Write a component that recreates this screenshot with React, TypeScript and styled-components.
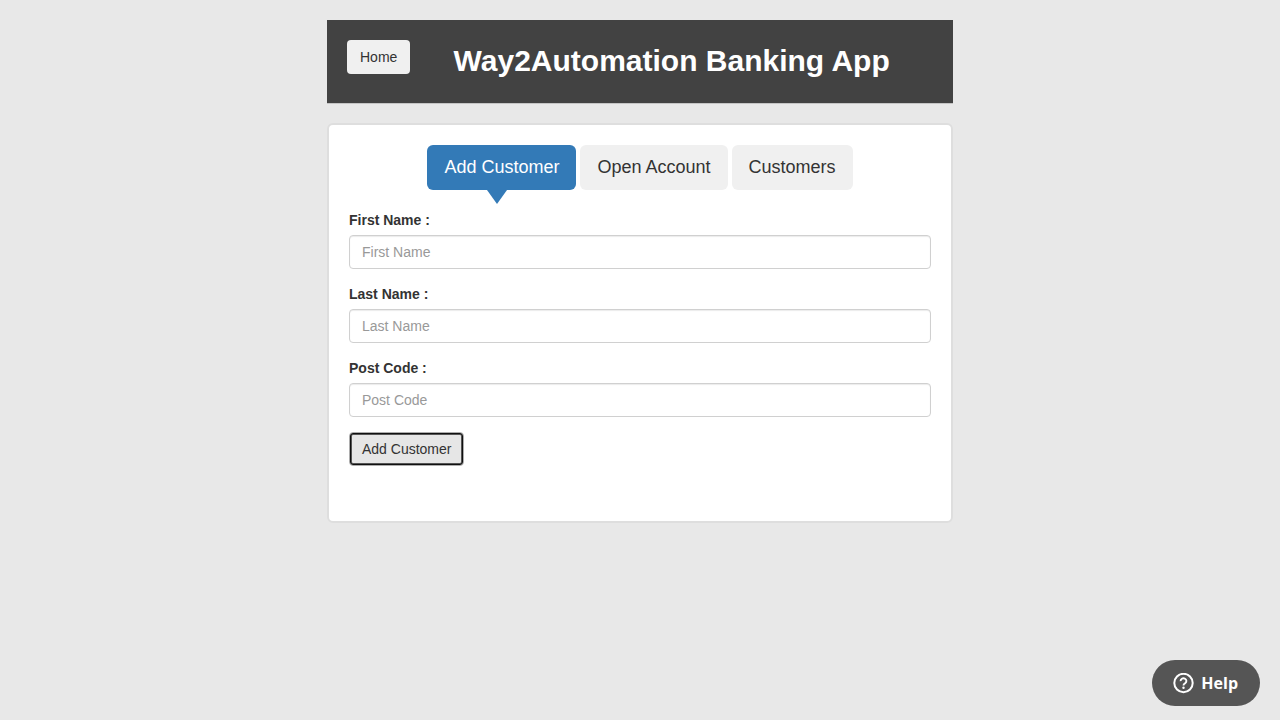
import React from "react";
import styled, { createGlobalStyle, css } from "styled-components";

const GlobalStyle = createGlobalStyle`
  *, *::before, *::after { box-sizing: border-box; }
  body {
    margin: 0;
    background: #e8e8e8;
    color: #333;
    font-family: "Liberation Sans", Arial, sans-serif;
    font-size: 14px;
    line-height: 20px;
  }
`;

const Page = styled.main`
  width: 100%;
  max-width: 626px;
  margin: 0 auto;
  padding: 20px 0;
  display: flex;
  flex-direction: column;
  gap: 20px;
`;

const Header = styled.header`
  display: flex;
  align-items: flex-start;
  padding: 20px 20px 21px;
  background: #424242;
  box-shadow: 0 1px 0 #c4c4c4;
`;

const Button = styled.button`
  height: 34px;
  padding: 0 13px;
  border: 0;
  border-radius: 4px;
  background: #f0f0f0;
  color: #333;
  font: inherit;
  cursor: pointer;
`;

const Title = styled.h1`
  flex: 1;
  margin: 0;
  color: #fff;
  text-align: center;
  font-size: 30px;
  line-height: 42px;
  font-weight: 700;
`;

const Card = styled.section`
  padding: 20px 20px 55px;
  border: 2px solid #dedede;
  border-radius: 6px;
  background: #fff;
`;

const Tabs = styled.nav`
  display: flex;
  justify-content: center;
  gap: 4px;
`;

const Tab = styled.button<{ $active?: boolean }>`
  position: relative;
  height: 45px;
  padding: 0 17px 2px;
  border: 0;
  border-radius: 6px;
  background: #f0f0f0;
  color: #333;
  font: inherit;
  font-size: 18px;
  cursor: pointer;

  ${({ $active }) =>
    $active &&
    css`
      background: #337ab7;
      color: #fff;

      &::after {
        content: "";
        position: absolute;
        top: 100%;
        left: 60px;
        border: solid transparent;
        border-width: 14px 10px 0;
        border-top-color: #337ab7;
      }
    `}
`;

const Form = styled.form`
  display: flex;
  flex-direction: column;
  align-items: stretch;
  gap: 15px;
  padding-top: 20px;
`;

const Field = styled.div`
  display: flex;
  flex-direction: column;
  gap: 5px;
`;

const Label = styled.label`
  font-weight: 700;
`;

const Input = styled.input`
  width: 100%;
  height: 34px;
  padding: 0 12px;
  border: 1px solid #d0d0d0;
  border-radius: 4px;
  background: #fff;
  box-shadow: inset 0 1px 1px rgba(0, 0, 0, 0.08);
  color: #555;
  font: inherit;

  &::placeholder { color: #999; opacity: 1; }
`;

const SubmitButton = styled(Button)`
  align-self: flex-start;
  border: 1px solid #adadad;
  background: #e6e6e6;
  padding: 0 12px;
  box-shadow: inset 0 0 0 1px #101010, inset 0 0 0 2px #555;
`;

const HelpButton = styled.button`
  position: fixed;
  right: 20px;
  bottom: 14px;
  display: flex;
  align-items: center;
  gap: 7px;
  height: 46px;
  padding: 0 22px 0 21px;
  border: 0;
  border-radius: 23px;
  background: #555;
  color: #fff;
  font: 700 16px/20px "Open Sans", "Noto Sans", sans-serif;
  cursor: pointer;
`;

const fields = [
  { id: "first-name", name: "First Name" },
  { id: "last-name", name: "Last Name" },
  { id: "post-code", name: "Post Code" },
];

export default function App() {
  return (
    <>
      <GlobalStyle />
      <Page>
        <Header>
          <Button type="button">Home</Button>
          <Title>Way2Automation Banking App</Title>
        </Header>
        <Card>
          <Tabs>
            <Tab type="button" $active>Add Customer</Tab>
            <Tab type="button">Open Account</Tab>
            <Tab type="button">Customers</Tab>
          </Tabs>
          <Form onSubmit={(e) => e.preventDefault()}>
            {fields.map(({ id, name }) => (
              <Field key={id}>
                <Label htmlFor={id}>{name} :</Label>
                <Input id={id} type="text" placeholder={name} />
              </Field>
            ))}
            <SubmitButton type="submit">Add Customer</SubmitButton>
          </Form>
        </Card>
      </Page>
      <HelpButton type="button">
        <svg width="21" height="21" viewBox="0 0 21 21" fill="none" aria-hidden="true">
          <circle cx="10.5" cy="10" r="9.2" stroke="#fff" strokeWidth="2" />
          <path
            d="M7.6 8.1a2.9 2.7 0 1 1 4.6 2.1c-.9.7-1.7 1-1.7 2.2"
            stroke="#fff"
            strokeWidth="1.9"
          />
          <circle cx="10.5" cy="14.7" r="1.2" fill="#fff" />
        </svg>
        Help
      </HelpButton>
    </>
  );
}
